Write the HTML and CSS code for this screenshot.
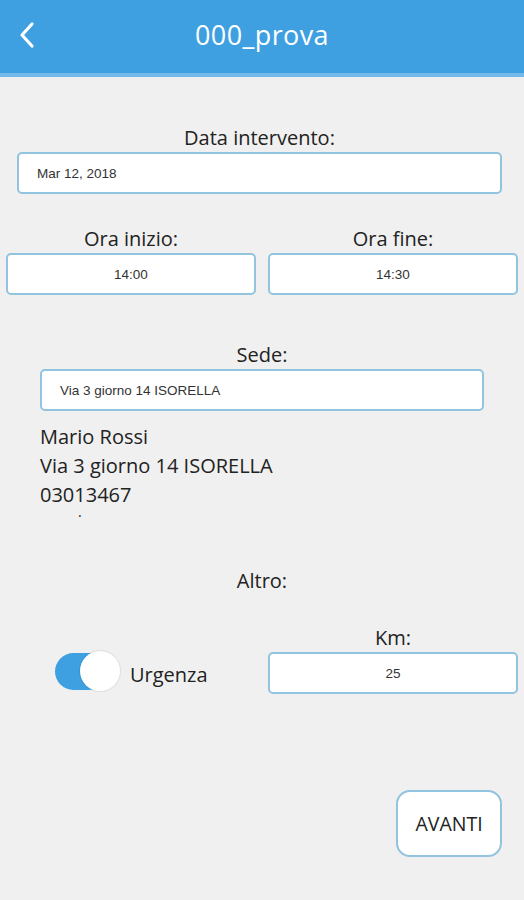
FILE: index.html
```html
<!DOCTYPE html>
<html lang="it">
  <head>
    <meta charset="UTF-8" />
    <meta name="viewport" content="width=device-width, initial-scale=1.0" />
    <title>000_prova</title>
    <link rel="stylesheet" href="styles.css">
  </head>
  <body>
    <header class="topbar">
      <a class="back" href="#">
        <svg width="18" height="28" viewBox="0 0 18 28">
          <polyline points="14,3 4,14 14,25" fill="none" stroke="#fff" stroke-width="3.2" stroke-linecap="round" stroke-linejoin="round" />
        </svg>
      </a>
      <h1 class="title">000_prova</h1>
    </header>

    <main class="content">
      <div class="field field-date">
        <label class="lbl">Data intervento:</label>
        <div class="box box-left">Mar 12, 2018</div>
      </div>

      <div class="row-times">
        <div class="field">
          <label class="lbl">Ora inizio:</label>
          <div class="box box-center">14:00</div>
        </div>
        <div class="field">
          <label class="lbl">Ora fine:</label>
          <div class="box box-center">14:30</div>
        </div>
      </div>

      <div class="field field-sede">
        <label class="lbl">Sede:</label>
        <div class="box box-left">Via 3 giorno 14 ISORELLA</div>
        <div class="address">
          <div>Mario Rossi</div>
          <div>Via 3 giorno 14 ISORELLA</div>
          <div>03013467</div>
          <div class="dot">.</div>
        </div>
      </div>

      <div class="lbl altro">Altro:</div>

      <div class="row-altro">
        <div class="urgenza">
          <span class="switch"><span class="knob"></span></span>
          <span class="urg-text">Urgenza</span>
        </div>
        <div class="field">
          <label class="lbl">Km:</label>
          <div class="box box-center">25</div>
        </div>
      </div>

      <div class="actions">
        <button class="btn-next">AVANTI</button>
      </div>
    </main>
  </body>
</html>
```

FILE: styles.css
```css
body {
  margin: 0;
  background-color: #f0f0f0;
  font-family: "Open Sans", "Noto Sans", sans-serif;
  color: #222;
}

.topbar {
  height: 73px;
  background-color: #3e9fe1;
  border-bottom: 4px solid #74b9e9;
  display: flex;
  align-items: center;
  justify-content: center;
  position: relative;
}

.back {
  position: absolute;
  left: 18px;
  top: 21px;
  display: flex;
}

.title {
  margin: 0;
  color: #fff;
  font-weight: 400;
  font-size: 27px;
  letter-spacing: 0.4px;
  margin-top: -4px;
}

.content {
  padding: 49px 6px 0;
}

.field {
  display: flex;
  flex-direction: column;
  align-items: center;
}

.lbl {
  font-size: 20px;
  line-height: 24px;
  text-align: center;
  color: #222;
  margin-bottom: 2px;
}

.box {
  box-sizing: border-box;
  width: 100%;
  height: 42px;
  background: #fff;
  border: 2px solid #92c3df;
  border-radius: 5px;
  font-family: "Liberation Sans", Arial, sans-serif;
  font-size: 13.5px;
  color: #333;
  display: flex;
  align-items: center;
}

.box-left {
  padding-left: 18px;
}

.box-center {
  justify-content: center;
}

.field-date {
  padding: 0 16px 0 11px;
}

.row-times {
  display: grid;
  grid-template-columns: 1fr 1fr;
  gap: 12px;
  margin-top: 33px;
}

.field-sede {
  margin-top: 48px;
  padding: 0 34px;
  align-items: stretch;
}

.address {
  margin-top: 11px;
  font-size: 20px;
  line-height: 29px;
}

.dot {
  font-size: 14px;
  line-height: 6px;
  padding-left: 38px;
  margin-top: 0;
}

.altro {
  margin-top: 54px;
}

.row-altro {
  display: grid;
  grid-template-columns: 1fr 1fr;
  gap: 12px;
  margin-top: 33px;
  align-items: end;
}

.urgenza {
  display: flex;
  align-items: center;
  padding-left: 49px;
  height: 42px;
}

.switch {
  position: relative;
  width: 52px;
  height: 37px;
  margin-top: -3px;
  background-color: #3e9fe1;
  border-radius: 19px;
  display: inline-block;
}

.knob {
  position: absolute;
  left: 25px;
  top: -2px;
  width: 40px;
  height: 40px;
  border-radius: 50%;
  background: #fff;
  box-shadow: 0 0 1px 1px rgba(0, 0, 0, 0.08);
}

.urg-text {
  margin-left: 23px;
  font-size: 20px;
  margin-top: 2px;
}

.actions {
  display: flex;
  justify-content: flex-end;
  margin-top: 96px;
  padding-right: 16px;
}

.btn-next {
  width: 106px;
  height: 67px;
  background: #fff;
  border: 2px solid #92c3df;
  border-radius: 14px;
  font-family: "Open Sans", "Noto Sans", sans-serif;
  font-size: 19.5px;
  color: #222;
}
```
